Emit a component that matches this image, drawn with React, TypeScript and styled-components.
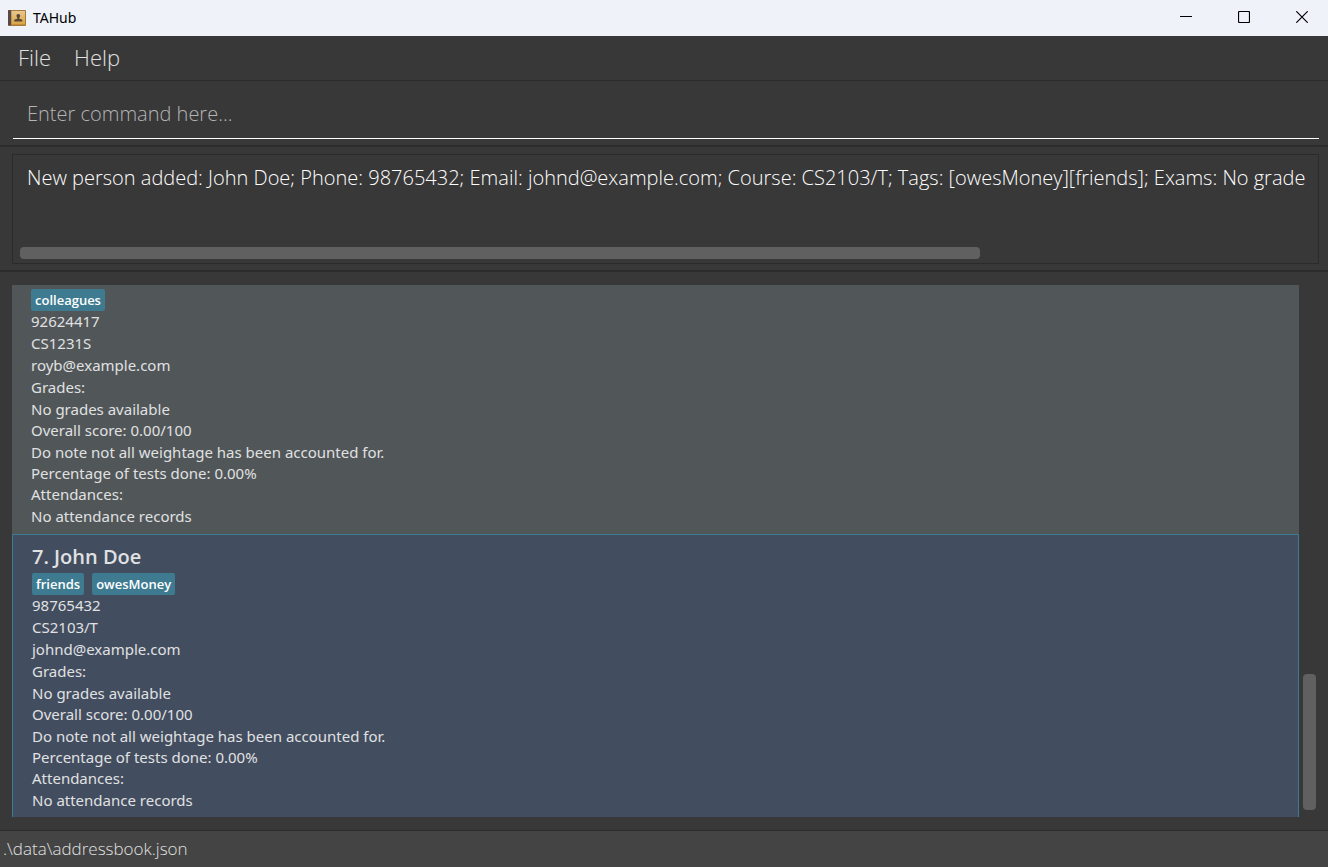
import React from "react";
import styled, { createGlobalStyle } from "styled-components";

const color = {
  base: "#383838",
  line: "#2b2b2b",
  text: "#e0e1e2",
  accent: "#3e7b91",
  card: "#515658",
  cardSelected: "#424d5f",
  thumb: "#606060",
};

const GlobalStyle = createGlobalStyle`
  * { box-sizing: border-box; }
  body { margin: 0; background: ${color.base}; font-family: "Open Sans", "Noto Sans", sans-serif; }
  button, input, textarea { font: inherit; color: inherit; border: 0; background: none; padding: 0; margin: 0; outline: 0; }
`;

const Window = styled.div`
  display: flex;
  flex-direction: column;
  height: 100vh;
  overflow: hidden;
  color: ${color.text};
`;

const TitleBar = styled.header`
  display: flex;
  align-items: center;
  flex: none;
  height: 36px;
  padding: 0 2px 0 8px;
  background: #eff3f9;
  color: #000;
`;

const Title = styled.h1`
  flex: 1;
  margin: 0 0 0 7px;
  font-family: "Noto Sans", sans-serif;
  font-size: 14px;
  font-weight: 400;
  line-height: 20px;
`;

const WindowButtons = styled.div`
  display: flex;
  align-self: flex-start;
  gap: 10px;
`;

const WindowButton = styled.button`
  display: flex;
  align-items: center;
  justify-content: center;
  width: 48px;
  height: 34px;
`;

const MenuBar = styled.nav`
  display: flex;
  align-items: flex-start;
  flex: none;
  gap: 23px;
  height: 45px;
  padding: 0 18px;
  border-bottom: 1px solid ${color.line};
`;

const MenuButton = styled.button`
  font-size: 22px;
  font-weight: 300;
  line-height: 42px;
`;

const CommandPane = styled.form`
  flex: none;
  padding: 8px 9px 6px 13px;
  border-bottom: 2px solid ${color.line};
`;

const CommandInput = styled.input`
  display: block;
  width: 100%;
  height: 50px;
  padding: 0 14px;
  border-bottom: 1px solid #fff;
  font-size: 20px;
  font-weight: 300;
  &::placeholder { color: #b4b4b4; opacity: 1; }
`;

const ResultPane = styled.section`
  flex: none;
  padding: 7px 9px 6px 12px;
  border-bottom: 2px solid ${color.line};
`;

const ResultBox = styled.div`
  display: flex;
  flex-direction: column;
  justify-content: space-between;
  height: 110px;
  padding: 8px 1px 4px 7px;
  border: 1px solid ${color.line};
`;

const ResultText = styled.textarea`
  display: block;
  width: 100%;
  height: 32px;
  padding-left: 7px;
  resize: none;
  overflow: hidden;
  white-space: pre;
  color: #fff;
  font-size: 20px;
  font-weight: 300;
  line-height: 30px;
`;

const HorizontalThumb = styled.div`
  width: 74%;
  height: 12px;
  border-radius: 4px;
  background: ${color.thumb};
`;

const ListPane = styled.main`
  display: flex;
  flex: 1;
  min-height: 0;
  padding: 13px 9px 13px 12px;
`;

const PersonList = styled.ul`
  flex: 1;
  min-width: 0;
  margin: 0;
  padding: 0;
  overflow: hidden;
  list-style: none;
  background: ${color.card};
`;

const ScrollTrack = styled.div`
  display: flex;
  align-items: flex-end;
  width: 20px;
  padding: 0 3px 7px 4px;
`;

const VerticalThumb = styled.div`
  width: 100%;
  height: 26%;
  border-radius: 4px;
  background: ${color.thumb};
`;

const Card = styled.li<{ $selected?: boolean }>`
  padding: ${(p) => (p.$selected ? "0 19px 6px" : "4px 19px 7px")};
  background: ${(p) => (p.$selected ? color.cardSelected : color.card)};
  border: ${(p) => (p.$selected ? `1px solid ${color.accent}` : "0")};
  border-bottom: 0;
`;

const Name = styled.h2`
  margin: 0;
  padding: 8px 0 2px;
  font-size: 20px;
  font-weight: 600;
  line-height: 28px;
`;

const Tags = styled.div`
  display: flex;
  align-items: flex-start;
  gap: 8px;
  height: 21px;
`;

const Tag = styled.span`
  padding: 0 4px;
  border-radius: 2px;
  background: ${color.accent};
  color: #fff;
  font-size: 13px;
  font-weight: 600;
  line-height: 22px;
`;

const Line = styled.p<{ $compact?: boolean }>`
  margin: 0;
  font-family: "Noto Sans", sans-serif;
  font-size: 15px;
  line-height: ${(p) => (p.$compact ? 21 : 22)}px;
`;

const StatusBar = styled.footer`
  flex: none;
  height: 37px;
  padding: 0 3px;
  border-top: 1px solid ${color.line};
  background: #444;
  font-size: 17px;
  font-weight: 300;
  line-height: 36px;
`;

const AppIcon = () => (
  <svg width="18" height="17" viewBox="0 0 18 17" aria-hidden="true">
    <defs>
      <linearGradient id="cover" x1="0" y1="0" x2="0" y2="1">
        <stop offset="0" stopColor="#e6c890" />
        <stop offset="1" stopColor="#d9a443" />
      </linearGradient>
    </defs>
    <rect x="0" y="0" width="18" height="16" rx="1" fill="#a9793a" />
    <rect x="3.500" y="1" width="13.500" height="13.500" fill="url(#cover)" />
    <rect x="0" y="0" width="3" height="15.500" rx="0.800" fill="#55494a" />
    <path d="M10.300 4c1.200 0 1.800.8 1.800 1.800 0 .9-.4 1.500-.8 2v.9l2.500.7c.4.200.6.5.6 1.200v.9H6.200v-.9c0-.7.2-1 .6-1.200l2.500-.7v-.9c-.4-.5-.8-1.100-.8-2C8.500 4.800 9.100 4 10.300 4z" fill="#5a4636" />
  </svg>
);

type Person = {
  name?: string;
  tags: string[];
  phone: string;
  course: string;
  email: string;
  selected?: boolean;
};

const people: Person[] = [
  { tags: ["colleagues"], phone: "92624417", course: "CS1231S", email: "royb@example.com" },
  {
    name: "7. John Doe",
    tags: ["friends", "owesMoney"],
    phone: "98765432",
    course: "CS2103/T",
    email: "johnd@example.com",
    selected: true,
  },
];

const PersonCard = ({ person }: { person: Person }) => (
  <Card $selected={person.selected}>
    {person.name && <Name>{person.name}</Name>}
    <Tags>
      {person.tags.map((tag) => (
        <Tag key={tag}>{tag}</Tag>
      ))}
    </Tags>
    <Line>{person.phone}</Line>
    <Line>{person.course}</Line>
    <Line>{person.email}</Line>
    <Line>Grades:</Line>
    <Line>No grades available</Line>
    <Line $compact>Overall score: 0.00/100</Line>
    <Line>Do note not all weightage has been accounted for.</Line>
    <Line $compact>Percentage of tests done: 0.00%</Line>
    <Line $compact>Attendances:</Line>
    <Line>No attendance records</Line>
  </Card>
);

export default function App() {
  return (
    <Window>
      <GlobalStyle />
      <TitleBar>
        <AppIcon />
        <Title>TAHub</Title>
        <WindowButtons>
          <WindowButton type="button" aria-label="Minimize">
            <svg width="12" height="12" viewBox="0 0 12 12"><path d="M0 5.500h12" stroke="#000" /></svg>
          </WindowButton>
          <WindowButton type="button" aria-label="Maximize">
            <svg width="12" height="12" viewBox="0 0 12 12">
              <rect x="0.500" y="0.500" width="11" height="11" rx="1" fill="none" stroke="#000" strokeWidth="1.200" />
            </svg>
          </WindowButton>
          <WindowButton type="button" aria-label="Close">
            <svg width="12" height="12" viewBox="0 0 12 12">
              <path d="M0.300 0.300l11.400 11.400M11.700 0.300L0.300 11.700" stroke="#000" strokeWidth="1.200" />
            </svg>
          </WindowButton>
        </WindowButtons>
      </TitleBar>
      <MenuBar>
        <MenuButton type="button">File</MenuButton>
        <MenuButton type="button">Help</MenuButton>
      </MenuBar>
      <CommandPane onSubmit={(e) => e.preventDefault()}>
        <CommandInput aria-label="Command" placeholder="Enter command here..." />
      </CommandPane>
      <ResultPane>
        <ResultBox>
          <ResultText
            readOnly
            wrap="off"
            aria-label="Result"
            value="New person added: John Doe; Phone: 98765432; Email: johnd@example.com; Course: CS2103/T; Tags: [owesMoney][friends]; Exams: No grade"
          />
          <HorizontalThumb />
        </ResultBox>
      </ResultPane>
      <ListPane>
        <PersonList>
          {people.map((person) => (
            <PersonCard key={person.phone} person={person} />
          ))}
        </PersonList>
        <ScrollTrack>
          <VerticalThumb />
        </ScrollTrack>
      </ListPane>
      <StatusBar>{".\\data\\addressbook.json"}</StatusBar>
    </Window>
  );
}
